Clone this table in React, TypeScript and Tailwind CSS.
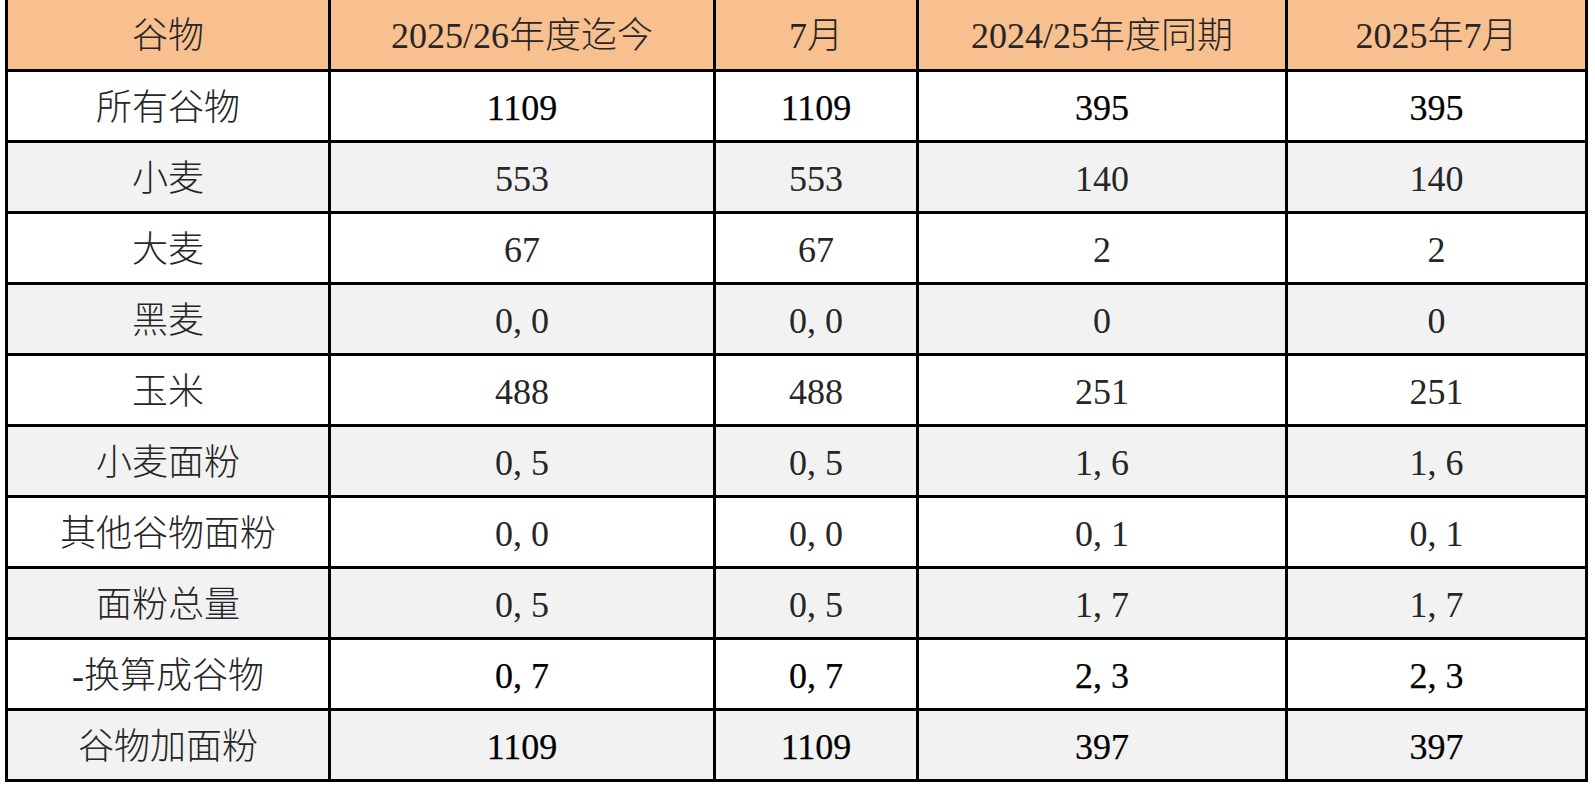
const headers = ["谷物", "2025/26年度迄今", "7月", "2024/25年度同期", "2025年7月"];

const rows = [
  { name: "所有谷物", values: ["1109", "1109", "395", "395"], bold: true },
  { name: "小麦", values: ["553", "553", "140", "140"] },
  { name: "大麦", values: ["67", "67", "2", "2"] },
  { name: "黑麦", values: ["0, 0", "0, 0", "0", "0"] },
  { name: "玉米", values: ["488", "488", "251", "251"] },
  { name: "小麦面粉", values: ["0, 5", "0, 5", "1, 6", "1, 6"] },
  { name: "其他谷物面粉", values: ["0, 0", "0, 0", "0, 1", "0, 1"] },
  { name: "面粉总量", values: ["0, 5", "0, 5", "1, 7", "1, 7"] },
  { name: "-换算成谷物", values: ["0, 7", "0, 7", "2, 3", "2, 3"], bold: true },
  { name: "谷物加面粉", values: ["1109", "1109", "397", "397"], bold: true },
];

// column widths incl. right border
const widths = ["w-[326px]", "w-[385px]", "w-[203px]", "w-[369px]", "w-[300px]"];

const App = () => {
  return (
    <div
      className="w-[1595px] h-[786px] bg-white pl-[5px]"
      style={{ fontFamily: '"Liberation Serif", "Noto Sans CJK SC", serif' }}
    >
      <div className="w-[1583px]">
        {/* Header */}
        <div className="flex h-[72px] bg-[#f8bf8f]">
          {headers.map((h, i) => (
            <div
              key={h}
              className={`${widths[i]} ${i === 0 ? "border-l-[3px]" : ""} flex items-center justify-center border-r-[3px] border-b-[3px] border-black text-[36px] font-light text-[#262626] pt-[2px]`}
            >
              {h}
            </div>
          ))}
        </div>

        {/* Body */}
        {rows.map((row, r) => (
          <div
            key={row.name}
            className={`flex h-[71px] ${r % 2 === 1 ? "bg-[#f2f2f2]" : "bg-white"}`}
          >
            <div
              className={`${widths[0]} flex items-center justify-center border-l-[3px] border-r-[3px] border-b-[3px] border-black text-[36px] font-light text-[#262626] pt-[4px]`}
            >
              {row.name}
            </div>
            {row.values.map((v, i) => (
              <div
                key={i}
                className={`${widths[i + 1]} flex items-center justify-center border-r-[3px] border-b-[3px] border-black text-[36px] pt-[4px] ${
                  row.bold ? "text-black [-webkit-text-stroke:0.25px_#000]" : "text-[#262626]"
                }`}
              >
                {v}
              </div>
            ))}
          </div>
        ))}
      </div>
    </div>
  );
};

export default App;
